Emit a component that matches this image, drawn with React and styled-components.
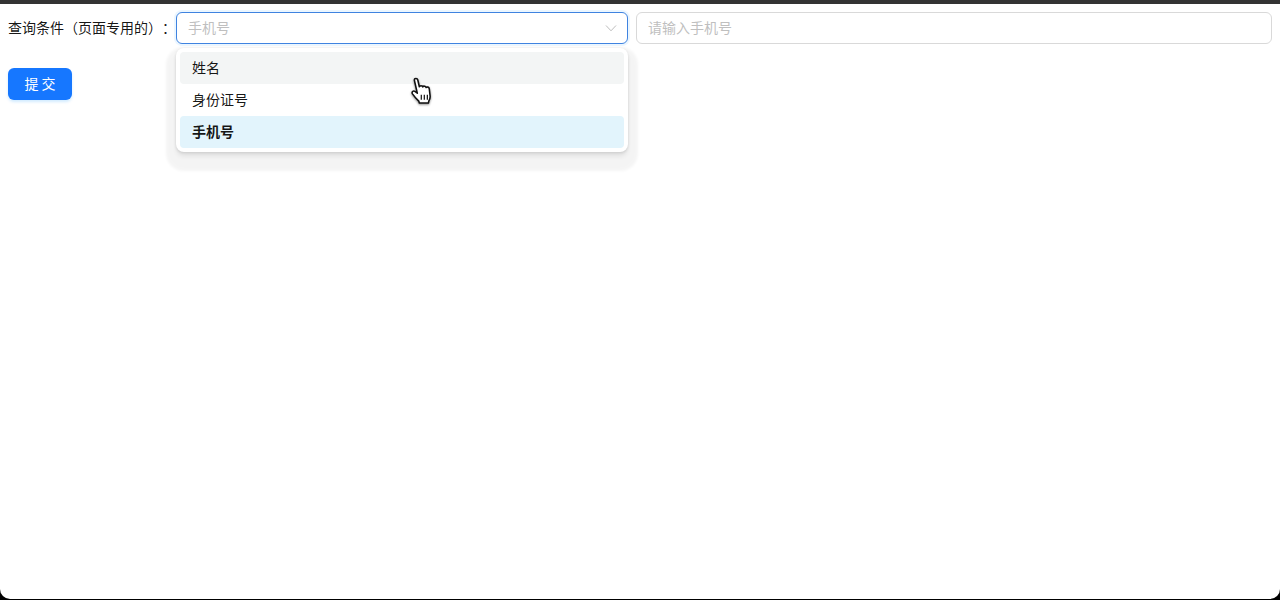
import React from 'react';
import styled, { createGlobalStyle } from 'styled-components';

const GlobalStyle = createGlobalStyle`
  html, body {
    margin: 0;
    padding: 0;
    height: 600px;
    overflow: hidden;
    background: #000;
  }
  #root {
    height: 600px;
  }
  * {
    box-sizing: border-box;
  }
`;

const Frame = styled.div`
  height: 599px;
  background: #fff;
  border-top: 4px solid #333;
  border-radius: 0 0 10px 10px;
  padding: 8px;
  font-family: "Noto Sans CJK SC", "Noto Sans", sans-serif;
  font-size: 14px;
  color: rgba(0, 0, 0, 0.92);
  text-spacing-trim: space-all;
`;

const QueryRow = styled.div`
  display: flex;
  align-items: center;
  height: 32px;
  margin-bottom: 24px;
`;

const Label = styled.label`
  width: 168px;
  flex: none;
  line-height: 30px;
  padding-bottom: 2px;
  white-space: nowrap;
`;

const Fields = styled.div`
  flex: 1;
  display: grid;
  grid-template-columns: 452px 636px;
  gap: 8px;
`;

const SelectWrap = styled.div`
  position: relative;
`;

const SelectBox = styled.div`
  height: 32px;
  display: flex;
  align-items: center;
  justify-content: space-between;
  padding: 0 10px 0 11px;
  background: #fff;
  border: 1px solid #3f83e0;
  border-radius: 6px;
  box-shadow: 0 0 0 2px rgba(5, 145, 255, 0.08);
  color: #bfbfbf;
`;

const SelectValue = styled.span`
  line-height: 28px;
  padding-bottom: 2px;
`;

const TextInput = styled.input`
  height: 32px;
  padding: 0 11px 2px;
  border: 1px solid #d9d9d9;
  border-radius: 6px;
  outline: none;
  font: inherit;
  background: #fff;

  &::placeholder {
    color: #bfbfbf;
    opacity: 1;
  }
`;

const Dropdown = styled.div`
  position: absolute;
  top: 36px;
  left: 0;
  width: 452px;
  padding: 4px;
  background: #fff;
  border-radius: 8px;
  box-shadow: 0 1px 3px rgba(0, 0, 0, 0.12),
    0 5px 4px 0 rgba(0, 0, 0, 0.06),
    0 9px 3px 10px rgba(0, 0, 0, 0.045);
  z-index: 2;
`;

const Option = styled.div`
  height: 32px;
  line-height: 30px;
  padding: 0 12px;
  border-radius: 4px;
  font-weight: ${props => (props.$selected ? 600 : 400)};
  background: ${props => {
    if (props.$selected) return '#e2f4fc';
    if (props.$active) return '#f3f5f5';
    return 'transparent';
  }};
`;

const SubmitButton = styled.button`
  display: block;
  width: 64px;
  height: 32px;
  padding: 0 0 2px;
  border: none;
  border-radius: 6px;
  background: #1677ff;
  color: #fff;
  font: inherit;
  letter-spacing: 3px;
  text-indent: 3px;
  box-shadow: 0 2px 3px rgba(5, 145, 255, 0.18);
`;

const CursorIcon = styled.svg`
  position: absolute;
  left: 232px;
  top: 64px;
  z-index: 3;
  filter: drop-shadow(0 1px 1px rgba(0, 0, 0, 0.45));
`;

const ChevronIcon = () => (
  <svg width="12" height="12" viewBox="0 0 12 12" fill="none" stroke="#bdbdbd" strokeWidth="1">
    <path d="M1 3.5 L6 8.8 L11 3.5" />
  </svg>
);

const HandCursor = () => (
  <CursorIcon width="29" height="34" viewBox="0 0 24 28">
    <path
      d="M5.2 3.2c0-1.5 2.5-1.7 2.900 0l1.300 5.600c.3-1.100 2.500-1.200 2.800.2.5-1 2.500-.9 2.800.5.6-.8 2.400-.5 2.600 1l.7 6c.2 1.800-.4 3-1.100 4.200l-.3 1.600H9.400l-.5-1.600c-1.300-1.300-3.500-3.500-5.200-6-.9-1.400.6-3 2-2l2 1.500z"
      fill="#fff"
      stroke="#111"
      strokeWidth="1.300"
      strokeLinejoin="round"
    />
    <path d="M11 15.500v4M13.500 15.500v4M16 15.500v4" stroke="#111" strokeWidth="1" />
  </CursorIcon>
);

const options = [
  { label: '姓名', active: true },
  { label: '身份证号' },
  { label: '手机号', selected: true },
];

const App = () => (
  <>
    <GlobalStyle />
    <Frame>
      <QueryRow>
        <Label>查询条件（页面专用的）：</Label>
        <Fields>
          <SelectWrap>
            <SelectBox>
              <SelectValue>手机号</SelectValue>
              <ChevronIcon />
            </SelectBox>
            <Dropdown>
              {options.map(option => (
                <Option key={option.label} $active={option.active} $selected={option.selected}>
                  {option.label}
                </Option>
              ))}
            </Dropdown>
            <HandCursor />
          </SelectWrap>
          <TextInput placeholder="请输入手机号" />
        </Fields>
      </QueryRow>
      <SubmitButton>提交</SubmitButton>
    </Frame>
  </>
);

export default App;
